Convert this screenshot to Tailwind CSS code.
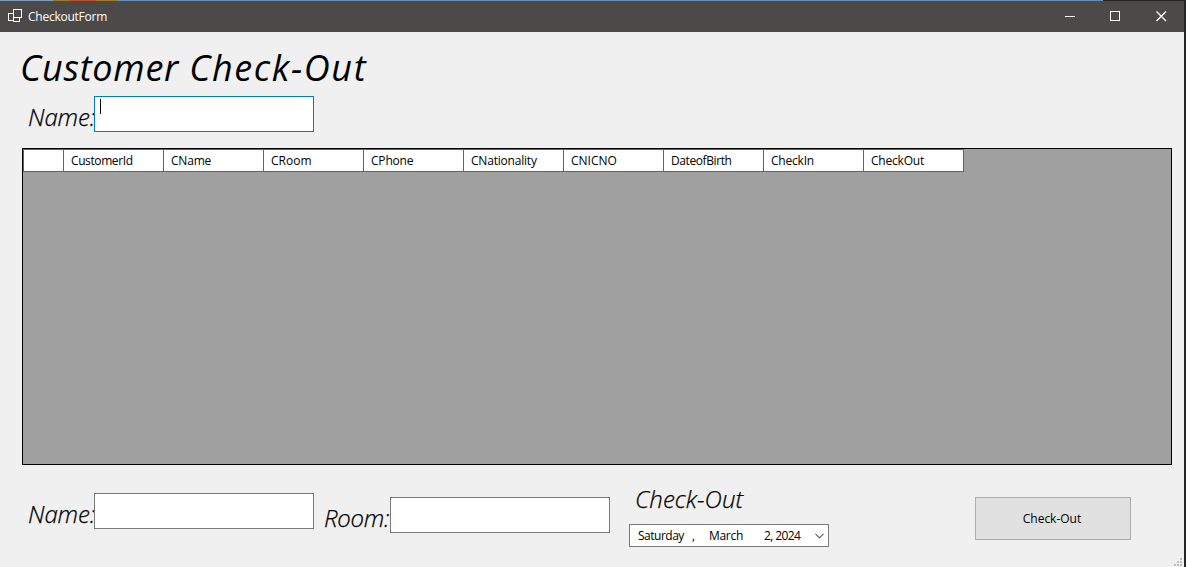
<!DOCTYPE html>
<html lang="en">
<head>
<meta charset="utf-8">
<title>CheckoutForm</title>
<script src="https://cdn.jsdelivr.net/npm/@tailwindcss/browser@4"></script>
</head>
<body class="w-[1186px] h-[567px] overflow-hidden bg-[#252525] font-['Open_Sans','Noto_Sans',sans-serif] text-black text-[12px] whitespace-nowrap">
<div class="flex h-px w-full"><i class="w-[53px] bg-[#7f9dbb]"></i><i class="w-4 bg-[#a87924]"></i><i class="w-[27px] bg-[#bc4e2c]"></i><i class="w-[21px] bg-[#a87924]"></i><i class="w-[986px] bg-[#658fbd]"></i></div>
<div class="w-[1184px] h-[566px] bg-[#f0f0f0] flex flex-col">
  <header class="h-[31px] shrink-0 bg-[#4c4a48] text-white flex items-center">
    <svg class="ml-2 -mt-px" width="14" height="14" fill="none" stroke="#fff" shape-rendering="crispEdges"><path d="M5.5 .5h8v8h-8zM5.5 4.5h-5v7h5M5.5 8.5v4h6v-4"/></svg>
    <span class="ml-[6px] mt-px tracking-[-0.25px]">CheckoutForm</span>
    <svg class="ml-auto mr-[17px] -mt-px" width="102" height="12" fill="none" stroke="#fff"><path shape-rendering="crispEdges" d="M0 6.5h10M45.500 1.500h9v9h-9z"/><path stroke-width="1.3" d="M91.500 1.500l9.500 9.500M101 1.500l-9.500 9.500"/></svg>
  </header>
  <main class="flex-1 pl-[22px]">
    <h1 class="h-[64px] -ml-[2px] pt-[9px] text-[36px] leading-[54px] italic tracking-[0.75px]">Customer <span class="tracking-[1.6px]">Check-Out</span></h1>
    <label class="flex h-[36px]">
      <span class="w-[72px] pl-[6px] pt-[4px] text-[24px] leading-[33px] font-light italic [-webkit-text-stroke:0.25px_black] tracking-[-0.1px]">Name:</span>
      <span class="w-[220px] h-[36px] bg-white border border-[#0078d7] pl-[5px] pt-[2px]"><i class="block w-px h-[15px] bg-black"></i></span>
    </label>
    <section class="mt-4 w-[1150px] h-[317px] bg-[#a0a0a0] border border-black">
      <div class="flex w-[941px] h-[23px] bg-white border-t border-b border-l border-[#646464] leading-[21px] tracking-[-0.2px]">
        <span class="w-[40px] border-r border-[#646464]"></span>
        <span class="w-[100px] border-r border-[#646464] pl-[7px] tracking-[-0.4px]">CustomerId</span>
        <span class="w-[100px] border-r border-[#646464] pl-[7px]">CName</span>
        <span class="w-[100px] border-r border-[#646464] pl-[7px] tracking-normal">CRoom</span>
        <span class="w-[100px] border-r border-[#646464] pl-[7px]">CPhone</span>
        <span class="w-[100px] border-r border-[#646464] pl-[7px]">CNationality</span>
        <span class="w-[100px] border-r border-[#646464] pl-[7px] tracking-normal">CNICNO</span>
        <span class="w-[100px] border-r border-[#646464] pl-[7px] tracking-[-0.4px]">DateofBirth</span>
        <span class="w-[100px] border-r border-[#646464] pl-[7px]">CheckIn</span>
        <span class="w-[100px] border-r border-[#646464] pl-[7px]">CheckOut</span>
      </div>
    </section>
    <div class="flex items-start">
      <label class="flex mt-[28px]">
        <span class="w-[72px] pl-[6px] pt-[4px] text-[24px] leading-[33px] font-light italic [-webkit-text-stroke:0.25px_black] tracking-[-0.1px]">Name:</span>
        <span class="w-[220px] h-[36px] bg-white border border-[#7a7a7a]"></span>
      </label>
      <label class="flex mt-[32px]">
        <span class="w-[76px] pl-[10px] pt-[4px] text-[24px] leading-[33px] font-light italic [-webkit-text-stroke:0.25px_black] tracking-[-0.3px]">Room:</span>
        <span class="w-[220px] h-[36px] bg-white border border-[#7a7a7a]"></span>
      </label>
      <div class="ml-[19px] mt-[17px] w-[200px]">
        <div class="h-[42px] pl-[6px] text-[24px] leading-[33px] font-light italic [-webkit-text-stroke:0.25px_black] tracking-[0.1px]">Check-Out</div>
        <div class="h-[23px] bg-white border border-[#7a7a7a] flex items-center pl-2 leading-[21px]">
          <span class="w-[54px] tracking-[-0.5px]">Saturday</span><span class="w-[17px]">,</span><span class="w-[55px] tracking-[-0.3px]">March</span><span class="tracking-[-0.6px]">2, 2024</span>
          <svg class="ml-auto mr-1" width="9" height="6" fill="none" stroke="#555" stroke-width="1.1"><path d="M.5 .8l4 4 4-4"/></svg>
        </div>
      </div>
      <button class="ml-[146px] mt-8 w-[156px] h-[43px] bg-[#e1e1e1] border border-[#adadad] pr-[2px]">Check-Out</button>
      <svg class="ml-[43px] mt-[93px]" width="8" height="8" fill="#bcbcbc" shape-rendering="crispEdges"><path d="M6 0h2v2h-2zM3 3h2v2h-2zM6 3h2v2h-2zM0 6h2v2h-2zM3 6h2v2h-2zM6 6h2v2h-2z"/></svg>
    </div>
  </main>
</div>
</body>
</html>
